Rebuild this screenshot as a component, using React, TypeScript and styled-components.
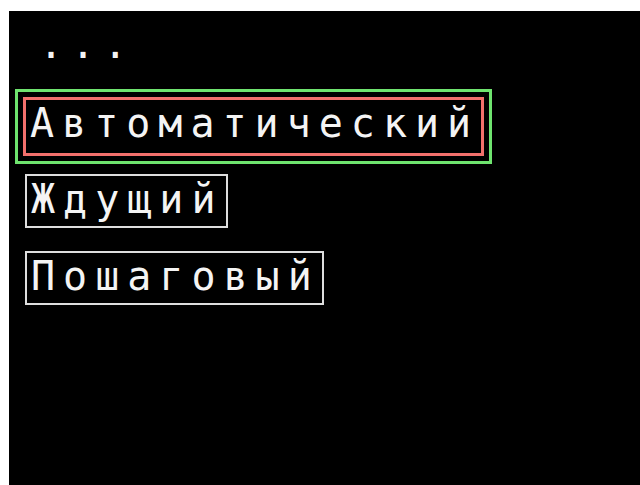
import React from "react";
import styled, { createGlobalStyle } from "styled-components";

const GlobalStyle = createGlobalStyle`
  html, body {
    margin: 0;
    padding: 0;
    background: #ffffff;
    overflow: hidden;
  }
`;

const Screen = styled.div`
  margin: 11px 0 0 9px;
  height: calc(100vh - 11px);
  background: #000000;
  padding: 10px 0 0 16px;
  box-sizing: border-box;
  font-family: "DejaVu Sans Mono", "Liberation Mono", monospace;
  font-size: 40px;
  letter-spacing: 8px;
  color: #f4f4f4;
`;

const Title = styled.div`
  height: 46px;
  line-height: 46px;
  padding-left: 14px;
  margin-bottom: 30px;
`;

const Menu = styled.div`
  display: grid;
  grid-auto-rows: 77px;
  align-items: start;
  justify-items: start;
`;

const Item = styled.div<{ $active?: boolean }>`
  line-height: 46px;
  white-space: nowrap;
  border: ${(p) => (p.$active ? "3px solid #f2706c" : "2px solid #dedede")};
  padding: ${(p) => (p.$active ? "0 2px 7px 4px" : "0 2px 4px 4px")};
  margin-left: ${(p) => (p.$active ? "-2px" : "0")};
  outline: ${(p) => (p.$active ? "3px solid #6fe46f" : "none")};
  outline-offset: 5px;
`;

const modes = ["Автоматический", "Ждущий", "Пошаговый"];

const App = () => {
  const selected = 0;
  return (
    <>
      <GlobalStyle />
      <Screen>
        <Title>...</Title>
        <Menu>
          {modes.map((m, i) => (
            <Item key={m} $active={i === selected}>
              {m}
            </Item>
          ))}
        </Menu>
      </Screen>
    </>
  );
};

export default App;
